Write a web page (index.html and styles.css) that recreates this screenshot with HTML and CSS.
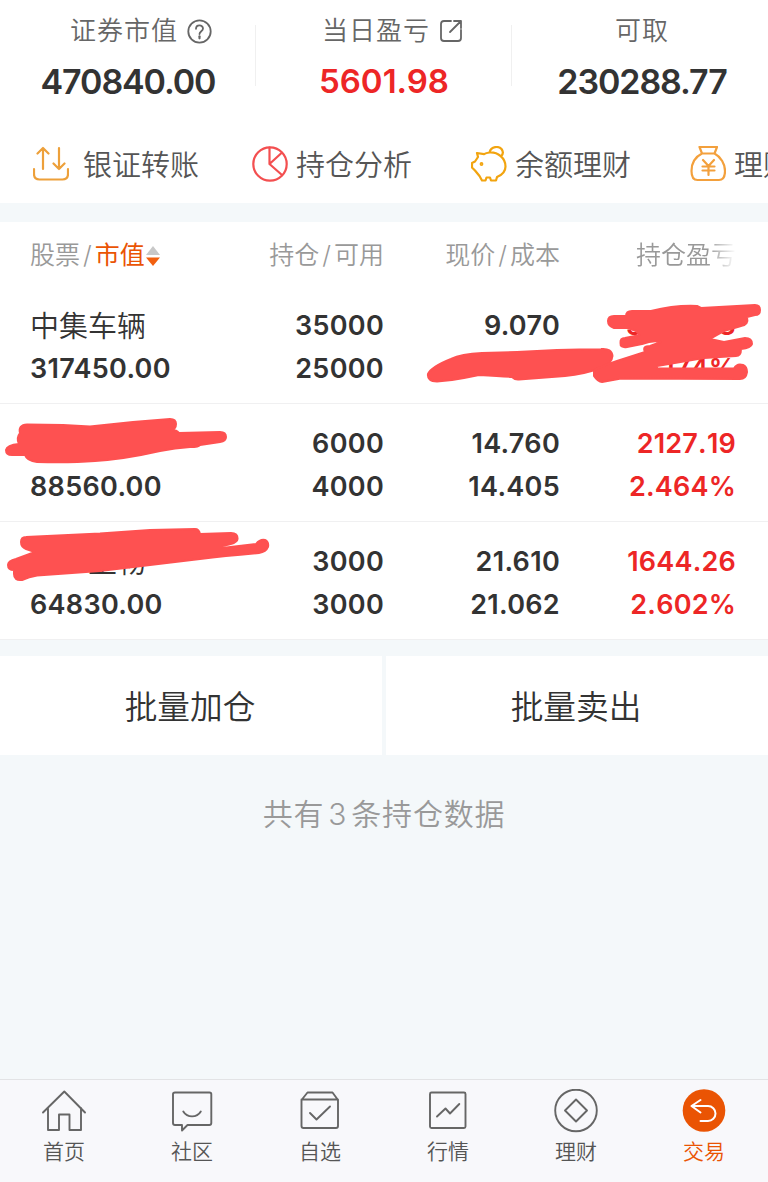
FILE: index.html
```html
<!DOCTYPE html>
<html lang="zh-CN">
<head>
  <meta charset="UTF-8" />
  <meta name="viewport" content="width=device-width, initial-scale=1.0"/>
  <title>持仓</title>
  <link rel="stylesheet" href="styles.css">
</head>
<body>

<header class="summary">
  <div class="summary-row">
    <div class="summary-item">
      <div class="summary-label with-help">证券市值
        <svg width="25" height="25" viewBox="0 0 25 25"><circle cx="12.5" cy="12.5" r="11.2"/><path d="M9 9.8c0-4.4 7-4.4 7-.3 0 2.7-3.5 2.7-3.5 5.6"/><path d="M12.5 17.3v2" stroke-width="2.2"/></svg>
      </div>
      <div class="summary-value">470840.00</div>
    </div>
    <div class="summary-item">
      <div class="summary-label with-link">当日盈亏
        <svg width="24" height="24" viewBox="0 0 24 24"><path d="M12 2H5Q2 2 2 5v14q0 3 3 3h14q3 0 3-3v-8M15 2h7v7M22 2L11 13"/></svg>
      </div>
      <div class="summary-value small up">5601.98</div>
    </div>
    <div class="summary-item">
      <div class="summary-label last">可取</div>
      <div class="summary-value">230288.77</div>
    </div>
  </div>

  <nav class="shortcuts">
    <a class="shortcut first">
      <svg width="36" height="36" viewBox="0 0 36 36" stroke="#eda03a"><path d="M1 23v5q0 5.500 5.500 5.500h23q5.500 0 5.500-5.500v-5M10 23V2M4.500 7.500L10 2l5.500 5.500M26 2v21M20.500 17.500L26 23l5.500-5.500"/></svg>
      银证转账
    </a>
    <a class="shortcut">
      <svg width="36" height="36" viewBox="0 0 36 36" stroke="#f34f50"><circle cx="18" cy="18" r="16.700"/><path d="M17.500 1.500V18L30 29M17.500 18L29.500 7"/></svg>
      持仓分析
    </a>
    <a class="shortcut">
      <svg width="36" height="36" viewBox="0 0 36 36" stroke="#f2a40f"><path d="M6 7l7 1.200Q15 6.800 18.500 6.500C27 6 34.500 12 34.500 20.500 34.500 25 31 29 26 31l-1 3.500h-5L19 31.500h-3.500L14.500 34.500h-3.500L8.500 30 4 24.500 1 21.500V17l3-1.500 3-4.500zM18.500 6.500C20 0 28 0 30.500 3q3 4-.5 7.500"/><circle cx="10.500" cy="18" r=".8"/></svg>
      余额理财
    </a>
    <a class="shortcut">
      <svg width="36" height="36" viewBox="0 0 36 36" stroke="#f3a03c"><path d="M9.500 1h17.500l-2.500 6.500h-12.500zM12 7.500C5 11 1.500 18 1.500 25c0 6 2 9 6 9h21.500c4 0 6-3 6-9 0-7-4-14-10.500-17.500M13 14l5.500 6 5.500-6M18.500 20v9M12.500 20.500h12M12.500 24.500h12"/></svg>
      理财
    </a>
  </nav>
</header>

<main class="holdings">
  <div class="row head">
    <div class="cell">股票<i>/</i><b>市值</b><svg class="sort" width="16" height="22" viewBox="0 0 16 22"><path d="M1 10L8 1l7 9z" fill="#c8c8c8"/><path d="M1 12.500h14L8 21z" fill="#f2600f"/></svg></div>
    <div class="cell">持仓<i>/</i>可用</div>
    <div class="cell">现价<i>/</i>成本</div>
    <div class="cell fade">持仓盈亏</div>
  </div>

  <div class="row">
    <div class="cell"><span class="name">中集车辆</span><span>317450.00</span></div>
    <div class="cell"><span>35000</span><span>25000</span></div>
    <div class="cell"><span>9.070</span></div>
    <div class="cell up"><span class="ends"><em>3</em><em>3</em></span><span>174%</span></div>
  </div>
  <div class="row">
    <div class="cell"><span class="name"></span><span>88560.00</span></div>
    <div class="cell"><span>6000</span><span>4000</span></div>
    <div class="cell"><span>14.760</span><span>14.405</span></div>
    <div class="cell up"><span>2127.19</span><span>2.464%</span></div>
  </div>
  <div class="row">
    <div class="cell"><span class="name tail">生物</span><span>64830.00</span></div>
    <div class="cell"><span>3000</span><span>3000</span></div>
    <div class="cell"><span>21.610</span><span>21.062</span></div>
    <div class="cell up"><span>1644.26</span><span>2.602%</span></div>
  </div>

  <!-- brush marks over the private values -->
  <svg class="marks" width="768" height="418" viewBox="0 222 768 418">
    <path d="M428 374Q431 367 451 359Q461 354 482 353L517 352L557 350L601 349Q612 348 612.500 356Q612 364 600 368Q585 374 565 376L519 379.500Q515 380 512 377Q500 376 479 375Q465 378 452 380L437 381.500Q427 381 428 374Z"/>
    <path d="M608 321Q608 316 614 316H626Q626 311 632 311L651 311Q675 305 697 306L701 308L755 305Q760 305 760 310Q760 315 755 315L747 317Q749 325 741 326L724 331Q718 334 710 339L724 342L745 338Q752 338 752 344Q751 348 741 349Q741 356 736 356L704 358L657 366V368.500H734Q737 363 743 365Q747 367 747 372Q746 379 740 379L621 378.500L602 382Q598 382 594 376V371Q596 368 617 361L645 352Q642 346 650 346L661 342Q653 340 642 344L627 347Q620 348 620.500 343Q620 338 625 338L640 335L636 331L628 328H614Q608 326 608 321Z"/>
    <path d="M6 450Q7 445 19 444Q16 438 20 433Q18 425 27 424.500L63 425L90 426.500L133 422L170 419Q176 419 176 424Q176 429 171 430Q177 430 179 433L220 432Q226 432 226 437Q226 441 220 442L200 445Q199 447 190 447Q175 448 160 451Q125 459 95 461Q70 463 37 462Q27 461 25 455H12Q6 455 6 450Z"/>
    <path d="M21 542Q21 537 26 537L100 533.500L150 530L195 529Q199 529 200 534L231 533Q238 533 237.500 539Q237 544 222 546V548L256 544Q260 539 265 540Q269 542 268 547Q266 552 259 553Q225 556 200 559L150 565L100 571L37 575.500Q29 577 22 580Q14 581 14 574V570Q8 570 8 565Q8 561 16 559L35 552L26 549Q21 547 21 542Z"/>
  </svg>
</main>

<div class="batch">
  <button class="batch-btn">批量加仓</button>
  <button class="batch-btn">批量卖出</button>
</div>

<p class="count">共有<span>3</span>条持仓数据</p>

<nav class="tabbar">
  <a class="tab">
    <svg width="44" height="44" viewBox="0 0 44 44"><path d="M1 23.500L22.300 2.500 43 23.500M6 19v22h11V25.500h10.500V41H39V19"/></svg>
    首页
  </a>
  <a class="tab">
    <svg width="44" height="44" viewBox="0 0 44 44"><path d="M5 3.500h34.500q1.800 0 1.800 1.800V34q0 2-2 2H17.500l-5.500 5.500V36H5q-2 0-2-2V5.300q0-1.800 2-1.800zM13.300 22.500c4 6.500 13.500 6.500 17.500 0"/></svg>
    社区
  </a>
  <a class="tab">
    <svg width="44" height="44" viewBox="0 0 44 44"><path d="M3.500 11l6-7.500h25L40 11v26q0 2-2 2H5.500q-2 0-2-2zM3.500 10.500H40M12 24l6.500 6.500L32 17.500"/></svg>
    自选
  </a>
  <a class="tab">
    <svg width="44" height="44" viewBox="0 0 44 44"><rect x="4" y="3.500" width="35.500" height="35.500" rx="1.500"/><path d="M11 27.500l8.500-8 4.500 5L33.300 15"/></svg>
    行情
  </a>
  <a class="tab">
    <svg width="44" height="44" viewBox="0 0 44 44"><circle cx="22" cy="21.500" r="20.800"/><path d="M22 10.500l11 11-11 11-11-11z"/></svg>
    理财
  </a>
  <a class="tab active">
    <svg width="44" height="44" viewBox="0 0 44 44"><circle cx="22" cy="21.500" r="21.300"/><path d="M18.500 11l-9 6 9 6.500M9.500 17H26a7.500 7.500 0 0 1 0 15h-7.500"/></svg>
    交易
  </a>
</nav>

</body>
</html>
```
FILE: styles.css
```css
* {
  box-sizing: border-box;
}
body {
  font-family: 'Inter', 'Noto Sans CJK SC', sans-serif;
  margin: 0;
  width: 768px;
  height: 1182px;
  overflow: hidden;
  display: flex;
  flex-direction: column;
  background: #f4f8fa;
  color: #333;
}
svg {
  fill: none;
  stroke-linecap: round;
  stroke-linejoin: round;
  flex: none;
}
.up {
  color: #ed2626;
}

/* account summary */
.summary {
  background: white;
  height: 203px;
  margin-bottom: 19px;
}
.summary-row {
  display: flex;
  height: 125px;
}
.summary-item {
  width: 256px;
  padding-top: 11px;
  background: linear-gradient(#f0f0f0, #f0f0f0) no-repeat right 25px / 1px 61px;
}
.summary-item:last-child {
  background: none;
}
.summary-label {
  display: flex;
  justify-content: center;
  align-items: center;
  gap: 9px;
  height: 40px;
  font-size: 26px;
  font-weight: 350;
  line-height: 36px;
  letter-spacing: 1px;
  color: #666;
}
.summary-label svg {
  stroke: #666;
  stroke-width: 1.8;
}
.with-help {
  padding-left: 26px;
}
.with-link {
  padding-left: 17px;
}
.summary-label.last {
  padding-left: 4px;
}
.summary-value {
  text-align: center;
  font-size: 34px;
  font-weight: 600;
  line-height: 62px;
  letter-spacing: -1.1px;
}
.summary-value.small {
  font-size: 33px;
  line-height: 60px;
  letter-spacing: 0;
}
.summary-item:last-child .summary-value {
  padding-left: 4px;
}

/* shortcuts */
.shortcuts {
  display: flex;
  padding-left: 33px;
  height: 78px;
  overflow: hidden;
}
.shortcut {
  display: flex;
  align-items: center;
  gap: 8px;
  flex: none;
  width: 219px;
  height: 76px;
  font-size: 29px;
  font-weight: 350;
  color: #555;
  white-space: nowrap;
}
.shortcut.first {
  gap: 14px;
}
.shortcut svg {
  margin-top: 2px;
  stroke-width: 2.2;
}

/* holdings table */
.holdings {
  position: relative;
  height: 418px;
  background: white;
}
.row {
  display: grid;
  grid-template-columns: 178px 176px 176px 176px;
  height: 118px;
  padding: 18px 0 0 30px;
  border-bottom: 1px solid #f0f0f1;
}
.cell {
  text-align: right;
  font-size: 27px;
  font-weight: 600;
  line-height: 43px;
  letter-spacing: 0.3px;
}
.cell:first-child {
  text-align: left;
}
.cell.up {
  font-kerning: none;
  letter-spacing: 0.2px;
}
.cell span {
  display: block;
  height: 43px;
}
.cell .name {
  font-size: 29px;
  font-weight: 350;
  line-height: 45px;
  letter-spacing: 0;
}
.cell .tail {
  padding-left: 58px;
}
.cell .ends {
  display: flex;
  justify-content: space-between;
  padding-left: 66px;
}
.ends em {
  font-style: normal;
}
.row.head {
  height: 64px;
  padding-top: 12px;
  border: none;
}
.head .cell {
  height: 43px;
  font-size: 25px;
  font-weight: 350;
  color: #999;
  letter-spacing: 0;
}
.head .cell:first-child {
  display: flex;
  align-items: center;
}
.head i {
  font-style: normal;
  margin: 0 3px;
}
.head b {
  font-weight: 400;
  color: #ea5404;
}
.head .fade {
  -webkit-mask-image: linear-gradient(to left, transparent, black 28px);
  mask-image: linear-gradient(to left, transparent, black 28px);
}
.marks {
  position: absolute;
  left: 0;
  top: 0;
  fill: #fe5151;
  stroke: #fe5151;
  stroke-width: 2;
}

/* batch buttons */
.batch {
  display: flex;
  gap: 4px;
  margin-top: 16px;
}
.batch-btn {
  flex: 1;
  height: 99px;
  padding: 3px 2px 0 0;
  border: none;
  background: white;
  font-family: inherit;
  font-size: 32.7px;
  font-weight: 350;
  line-height: 96px;
  color: #333;
}
.count {
  margin: 39px 0 0;
  text-align: center;
  font-size: 30px;
  font-weight: 350;
  line-height: 40px;
  letter-spacing: 0.8px;
  color: #999;
}
.count span {
  margin: 0 4px;
}

/* bottom tabs */
.tabbar {
  display: flex;
  height: 103px;
  margin-top: auto;
  border-top: 1px solid #e2e3e5;
  background: #f8f8fb;
}
.tab {
  display: flex;
  flex-direction: column;
  align-items: center;
  flex: 1;
  padding-top: 9px;
  font-size: 21px;
  font-weight: 350;
  line-height: 38px;
  color: #555;
}
.tab svg {
  stroke: #666;
  stroke-width: 1.9;
}
.tab.active {
  color: #ea5404;
}
.tab.active svg {
  stroke: white;
  stroke-width: 2;
}
.tab.active circle {
  fill: #ea5404;
  stroke: none;
}
```
